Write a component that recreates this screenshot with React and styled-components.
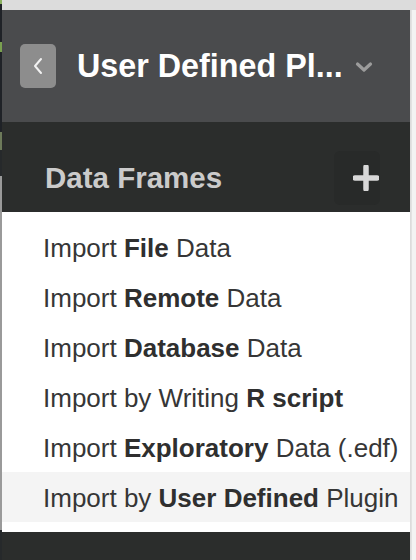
import React from "react";
import styled, { createGlobalStyle } from "styled-components";

const Global = createGlobalStyle`
  html, body { margin: 0; padding: 0; overflow: hidden; background: #dcdcdc; }
  body { font-family: "Liberation Sans", Arial, sans-serif; }
`;

const Page = styled.div`
  display: grid;
  grid-template-columns: 2px 408px 6px;
  grid-template-rows: 10px 550px;
  width: 416px;
  height: 560px;
`;

const TopStrip = styled.div`
  grid-column: 2 / 4;
  background: #dcdcdc;
`;

const EdgeLeft = styled.div`
  grid-row: 1 / 3;
  grid-column: 1;
  background: linear-gradient(
    #8ab060 0 4px, #1f2227 4px 42px, #7aa050 42px 52px, #1f2227 52px 132px,
    #6d7a5a 132px 150px, #26292b 150px 176px, #9a9a9a 176px 530px, #26292b 530px
  );
`;

const EdgeRight = styled.div`
  background: #f3f3f3;
  border-left: 1px solid #e2e2e2;
  margin-left: 1px;
`;

const Panel = styled.div`
  display: flex;
  flex-direction: column;
`;

const Header = styled.header`
  height: 112px;
  background: #4a4b4d;
  display: flex;
  align-items: center;
  padding-left: 18px;
`;

const BackButton = styled.button`
  width: 36px;
  height: 44px;
  border: none;
  border-radius: 5px;
  background: #8d8d8d;
  display: flex;
  align-items: center;
  justify-content: center;
  padding: 0;
  margin-right: 21px;
`;

const Title = styled.h1`
  margin: 0;
  font-size: 32.3px;
  font-weight: 700;
  color: #ffffff;
  white-space: nowrap;
`;

const Caret = styled.span`
  display: flex;
  margin-left: 12px;
  margin-top: 2px;
`;

const Section = styled.div`
  height: 90px;
  box-sizing: border-box;
  background: #2b2d2c;
  display: flex;
  align-items: center;
  padding: 20px 30px 0 43px;
`;

const SectionTitle = styled.h2`
  margin: 0;
  flex: 1;
  font-size: 29.5px;
  font-weight: 700;
  color: #cbcbcb;
  padding-top: 2px;
`;

const AddButton = styled.button`
  width: 46px;
  height: 54px;
  border: none;
  border-radius: 6px;
  background: #282a29;
  display: flex;
  align-items: center;
  justify-content: flex-end;
  padding: 0 1px 0 0;
  margin-top: 2px;
`;

const Menu = styled.ul`
  list-style: none;
  margin: 0;
  padding: 10px 0;
  background: #ffffff;
`;

const Item = styled.li`
  display: block;
  height: 50px;
  line-height: 50px;
  padding-left: 41px;
  padding-top: 1px;
  box-sizing: border-box;
  font-size: 26px;
  color: #363636;
  white-space: nowrap;
  background: ${(p) => (p.$active ? "#f4f4f4" : "transparent")};
  b { font-weight: 700; color: #2f2f2f; }
`;

const Footer = styled.div`
  flex: 1;
  background: #2b2d2c;
`;

const items = [
  ["Import ", "File", " Data"],
  ["Import ", "Remote", " Data"],
  ["Import ", "Database", " Data"],
  ["Import by Writing ", "R script", ""],
  ["Import ", "Exploratory", " Data (.edf)"],
  ["Import by ", "User Defined", " Plugin"],
];

export default function App() {
  return (
    <>
      <Global />
      <Page>
        <EdgeLeft />
        <TopStrip />
        <Panel>
          <Header>
            <BackButton aria-label="Back">
              <svg width="12" height="18" viewBox="0 0 12 18">
                <path d="M9 2 L3 9 L9 16" fill="none" stroke="#f2f2f2" strokeWidth="2" strokeLinecap="round" strokeLinejoin="round" />
              </svg>
            </BackButton>
            <Title>User Defined Pl...</Title>
            <Caret>
              <svg width="18" height="12" viewBox="0 0 18 12">
                <path d="M2.5 3 L9 9 L15.5 3" fill="none" stroke="#9c9c9c" strokeWidth="3.2" strokeLinecap="round" strokeLinejoin="round" />
              </svg>
            </Caret>
          </Header>
          <Section>
            <SectionTitle>Data Frames</SectionTitle>
            <AddButton aria-label="Add">
              <svg width="26" height="26" viewBox="0 0 26 26">
                <path d="M13 2 V24 M2 13 H24" stroke="#d8d8d8" strokeWidth="5.5" strokeLinecap="round" />
              </svg>
            </AddButton>
          </Section>
          <Menu>
            {items.map(([a, b, c], i) => (
              <Item key={i} $active={i === 5}>
                {a}
                <b>{b}</b>
                {c}
              </Item>
            ))}
          </Menu>
          <Footer />
        </Panel>
        <EdgeRight />
      </Page>
    </>
  );
}
